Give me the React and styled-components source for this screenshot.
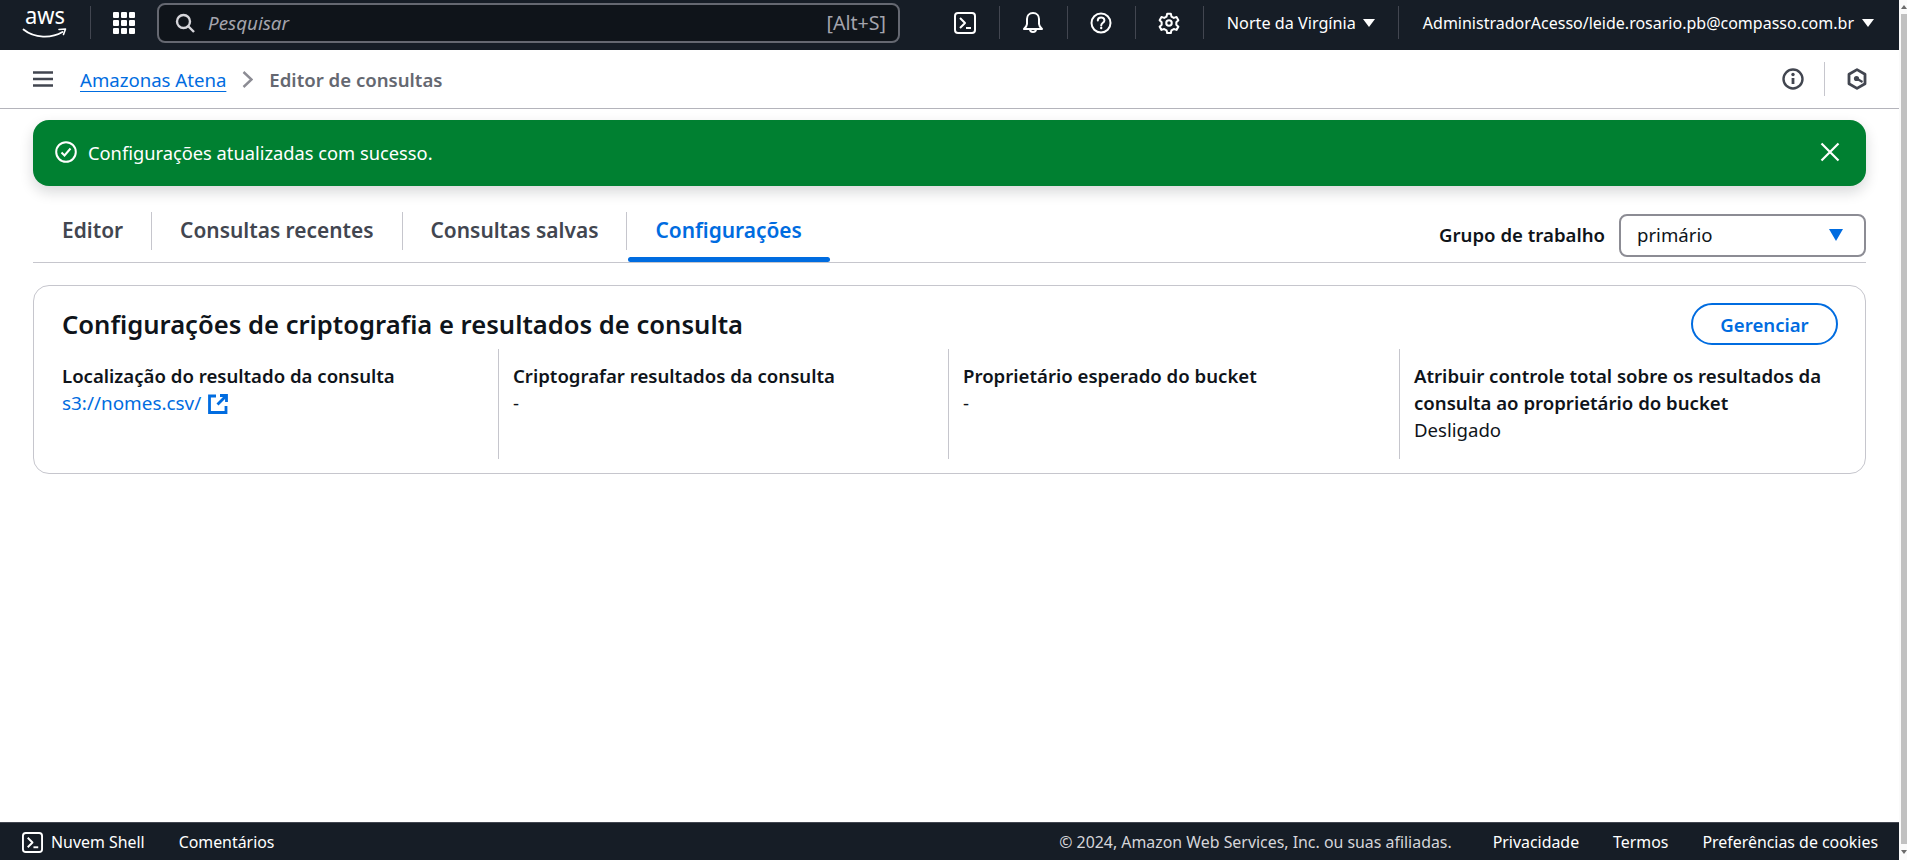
import React from "react";
import styled, { createGlobalStyle } from "styled-components";

const GlobalStyle = createGlobalStyle`
  html, body {
    margin: 0;
    padding: 0;
    height: 100%;
    overflow: hidden;
    background: #fff;
  }

  body {
    font-family: "Noto Sans", "Open Sans", sans-serif;
    font-size: 18.6px;
    color: #0f141a;
  }

  #root {
    height: 100%;
  }
`;

const Page = styled.div`
  height: 860px;
  display: flex;
`;

const Content = styled.div`
  flex: 1;
  min-width: 0;
  display: flex;
  flex-direction: column;
`;

const Scrollbar = styled.div`
  width: 8px;
  padding-left: 2px;
  box-sizing: border-box;
  background: #fafafa;
  flex-shrink: 0;
  display: flex;
  flex-direction: column;
  align-items: center;
  justify-content: space-between;
  padding-top: 5px;
  padding-bottom: 6px;
`;

const ScrollThumb = styled.div`
  width: 6px;
  flex: 1;
  margin: 5px 0 6px;
  background: #c1c1c1;
`;

const ScrollArrow = styled.span`
  width: 0;
  height: 0;
  border-left: 3px solid transparent;
  border-right: 3px solid transparent;
  ${(p) => (p.$up ? "border-bottom" : "border-top")}: 4px solid #6b6b6b;
`;

const TopNav = styled.header`
  height: 50px;
  box-sizing: border-box;
  padding-bottom: 5px;
  background: #161d26;
  display: flex;
  align-items: center;
  color: #fff;
  flex-shrink: 0;
`;

const LogoLink = styled.div`
  width: 91px;
  padding-left: 23px;
  box-sizing: border-box;
  display: flex;
  align-items: center;
  height: 33px;
  border-right: 1px solid #424650;
  svg {
    display: block;
    overflow: visible;
  }
`;

const GridButton = styled.div`
  width: 66px;
  display: flex;
  justify-content: center;
`;

const SearchBox = styled.div`
  width: 743px;
  height: 40px;
  box-sizing: border-box;
  border: 2px solid #656871;
  border-radius: 8px;
  background: #0f141a;
  display: flex;
  align-items: center;
  padding: 0 12px 0 16px;
  gap: 13px;
  color: #a4a4ad;
`;

const SearchText = styled.span`
  flex: 1;
  font-style: italic;
  font-size: 18.8px;
`;

const ShortcutText = styled.span`
  font-size: 19.6px;
  color: #a4a4ad;
`;

const NavRight = styled.div`
  margin-left: auto;
  display: flex;
  align-items: center;
  height: 33px;
`;

const NavIcon = styled.div`
  width: 68px;
  box-sizing: border-box;
  height: 100%;
  display: flex;
  align-items: center;
  justify-content: center;
  border-right: 1px solid #424650;
`;

const NavMenu = styled.div`
  height: 100%;
  display: flex;
  align-items: center;
  gap: ${(p) => (p.$last ? 8 : 7)}px;
  padding: 0 ${(p) => (p.$last ? 25 : 23)}px 0 ${(p) => (p.$last ? 24 : 23)}px;
  white-space: nowrap;
  font-size: ${(p) => (p.$last ? 16 : 16.2)}px;
  border-right: ${(p) => (p.$last ? "none" : "1px solid #424650")};
`;

const Caret = styled.span`
  width: 0;
  height: 0;
  border-left: ${(p) => p.$size || 6}px solid transparent;
  border-right: ${(p) => p.$size || 6}px solid transparent;
  border-top: ${(p) => (p.$size ? 12 : 8)}px solid ${(p) => p.$color || "#fff"};
  display: inline-block;
`;

const Breadcrumbs = styled.div`
  height: 59px;
  box-sizing: border-box;
  border-bottom: 1px solid #b4b4bb;
  display: flex;
  align-items: center;
  padding: 0 11px 0 33px;
  flex-shrink: 0;
`;

const Crumbs = styled.nav`
  margin-left: 27px;
  display: flex;
  align-items: center;
  gap: 16px;
  font-size: 18.6px;
  font-weight: 600;
`;

const CrumbLink = styled.a`
  color: #006ce0;
  font-weight: 400;
  text-decoration: underline;
  text-underline-offset: 4px;
  text-decoration-thickness: 1px;
`;

const CrumbCurrent = styled.span`
  color: #656871;
`;

const ToolGroup = styled.div`
  margin-left: auto;
  display: flex;
  align-items: center;
  height: 34px;
`;

const ToolButton = styled.div`
  width: ${(p) => p.$w}px;
  box-sizing: border-box;
  height: 100%;
  display: flex;
  align-items: center;
  justify-content: center;
  border-right: ${(p) => (p.$divider ? "1px solid #c6c6cd" : "none")};
`;

const Main = styled.main`
  flex: 1;
  padding: 11px 33px 0 33px;
  display: flex;
  flex-direction: column;
`;

const Flash = styled.div`
  height: 66px;
  box-sizing: border-box;
  border-radius: 16px;
  background: #008031;
  color: #fff;
  display: flex;
  align-items: center;
  padding: 0 26px 2px 22px;
  gap: 11px;
  box-shadow: 0 6px 14px rgba(15, 20, 26, 0.16);
`;

const FlashText = styled.span`
  flex: 1;
  font-size: 18.3px;
`;

const TabBar = styled.div`
  margin-top: 26px;
  height: 51px;
  box-sizing: border-box;
  display: flex;
  align-items: flex-start;
  justify-content: space-between;
  border-bottom: 1px solid #c6c6cd;
`;

const Tabs = styled.div`
  display: flex;
`;

const Tab = styled.div`
  position: relative;
  height: 38px;
  box-sizing: border-box;
  display: flex;
  align-items: center;
  padding: 0 28px 3px ${(p) => (p.$first ? 29 : 28)}px;
  font-size: 20.9px;
  font-weight: 600;
  color: ${(p) => (p.$active ? "#006ce0" : "#424650")};
  border-left: ${(p) => (p.$first ? "none" : "1px solid #c6c6cd")};

  ${(p) =>
    p.$active &&
    `
    &::after {
      content: "";
      position: absolute;
      left: 1px;
      right: 0;
      bottom: -12px;
      height: 5px;
      border-radius: 3px;
      background: #006ce0;
    }
  `}
`;

const Workgroup = styled.div`
  display: flex;
  align-items: center;
  gap: 14px;
  padding-top: 2px;
  font-weight: 600;
  font-size: 18.6px;
`;

const WorkgroupLabel = styled.span`
  margin-bottom: 2px;
`;

const SelectBox = styled.div`
  width: 247px;
  height: 43px;
  box-sizing: border-box;
  border: 2px solid #8c8c94;
  border-radius: 8px;
  display: flex;
  align-items: center;
  justify-content: space-between;
  padding: 0 21px 2px 16px;
  font-weight: 400;
`;

const Card = styled.section`
  margin-top: 22px;
  height: 189px;
  box-sizing: border-box;
  border: 1px solid #c6c6cd;
  border-radius: 16px;
  padding: 17px 27px 0 28px;
`;

const CardHeader = styled.div`
  display: flex;
  align-items: center;
  justify-content: space-between;
  height: 42px;
`;

const CardTitle = styled.h2`
  margin: 0;
  font-size: 25.6px;
  font-weight: 600;
`;

const ManageButton = styled.button`
  width: 147px;
  height: 42px;
  box-sizing: border-box;
  border: 2px solid #006ce0;
  border-radius: 21px;
  background: #fff;
  color: #006ce0;
  font: 600 18.6px "Noto Sans", sans-serif;
`;

const Columns = styled.div`
  margin-top: 4px;
  display: grid;
  grid-template-columns: 436px 450px 451px 1fr;
  height: 110px;
`;

const Column = styled.div`
  padding: 13px 14px 0 ${(p) => (p.$first ? 0 : 14)}px;
  border-left: ${(p) => (p.$first ? "none" : "1px solid #c6c6cd")};
  line-height: 27px;
`;

const Label = styled.div`
  font-weight: 600;
`;

const ExternalLink = styled.a`
  color: #006ce0;
  display: inline-flex;
  align-items: center;
  gap: 7px;
  font-size: 18.9px;
`;

const Footer = styled.footer`
  height: 38px;
  background: #161d26;
  border-top: 1px solid #424650;
  box-sizing: border-box;
  color: #fff;
  display: flex;
  align-items: center;
  padding: 1px 21px 0 22px;
  font-size: 15.9px;
  flex-shrink: 0;
`;

const FooterItem = styled.span`
  display: flex;
  align-items: center;
  gap: 8px;
  margin-right: 34px;
`;

const Copyright = styled.span`
  margin-left: auto;
  color: #d5d5da;
  margin-right: 7px;
`;

const FooterLink = styled.span`
  margin-left: 34px;
`;

const ShellIcon = ({ size = 22 }) => (
  <svg width={size} height={size} viewBox="0 0 22 22" fill="none" stroke="#fff" strokeWidth="2">
    <rect x="1" y="1" width="20" height="20" rx="3" />
    <path d="M6 6l5 5-5 5" strokeLinejoin="round" />
    <path d="M12 16h5" />
  </svg>
);

const AwsLogo = () => (
  <svg width="44" height="30" viewBox="0 0 44 30">
    <text
      x="2"
      y="16"
      fill="#fff"
      fontFamily="Noto Sans, sans-serif"
      fontSize="23"
      textLength="40"
      lengthAdjust="spacingAndGlyphs"
    >
      aws
    </text>
    <path d="M0.500 21.500c11 9 28 9 39 2.500" fill="none" stroke="#fff" strokeWidth="1.800" strokeLinecap="round" />
    <path d="M36 21.500l6.500-.5-2 5.500" fill="none" stroke="#fff" strokeWidth="1.600" strokeLinejoin="round" strokeLinecap="round" />
  </svg>
);

const GridIcon = () => (
  <svg width="22" height="22" viewBox="0 0 22 22" fill="#fff">
    {[0, 8, 16].flatMap((y) =>
      [0, 8, 16].map((x) => <rect key={`${x}-${y}`} x={x} y={y} width="6" height="6" rx="1" />)
    )}
  </svg>
);

const SearchIcon = () => (
  <svg width="20" height="20" viewBox="0 0 20 20" fill="none" stroke="#d5d5da" strokeWidth="2.400">
    <circle cx="8.500" cy="8.500" r="6.500" />
    <path d="M13 13l6 6" />
  </svg>
);

const BellIcon = () => (
  <svg width="22" height="24" viewBox="0 0 22 24" fill="none" stroke="#fff" strokeWidth="2" strokeLinejoin="round">
    <path d="M11 2c-4 0-6 3-6 6v5c0 2-1 3-3 5h18c-2-2-3-3-3-5V8c0-3-2-6-6-6z" />
    <path d="M8 18a3 3 0 0 0 6 0" />
  </svg>
);

const HelpIcon = () => (
  <svg width="22" height="22" viewBox="0 0 22 22" fill="none" stroke="#fff" strokeWidth="2">
    <circle cx="11" cy="11" r="9.500" />
    <path d="M7.800 8.600c0-4.200 6.600-4.200 6.600-.2 0 2.400-3.200 2.400-3.200 5" strokeLinecap="round" />
    <circle cx="11.200" cy="16" r="1.200" fill="#fff" stroke="none" />
  </svg>
);

const GearIcon = () => (
  <svg width="22" height="22" viewBox="0 0 24 24" fill="none" stroke="#fff" strokeWidth="2.200" strokeLinejoin="round">
    <path d="M10 2h4l.7 3 2.500 1.400 3-.9 2 3.500-2.200 2.100v2.800l2.200 2.100-2 3.500-3-.9-2.500 1.400-.7 3h-4l-.7-3-2.500-1.400-3 .9-2-3.500 2.200-2.100v-2.800L1.800 9l2-3.500 3 .9L9.300 5z" />
    <circle cx="12" cy="12" r="3" />
  </svg>
);

const MenuIcon = () => (
  <svg width="20" height="16" viewBox="0 0 20 16" stroke="#424650" strokeWidth="2.400">
    <path d="M0 1.500h20M0 8h20M0 14.500h20" />
  </svg>
);

const ChevronIcon = () => (
  <svg width="11" height="17" viewBox="0 0 11 17" fill="none" stroke="#8c8c94" strokeWidth="2.400">
    <path d="M1.500 1l8 7.500-8 7.500" />
  </svg>
);

const InfoIcon = () => (
  <svg width="22" height="22" viewBox="0 0 22 22" fill="none" stroke="#424650" strokeWidth="2.400">
    <circle cx="11" cy="11" r="9.500" />
    <path d="M11 10v6" strokeWidth="2.800" />
    <circle cx="11" cy="6.500" r="1.700" fill="#424650" stroke="none" />
  </svg>
);

const HexIcon = () => (
  <svg width="20" height="22" viewBox="0 0 20 22" fill="none" stroke="#424650" strokeWidth="2.800" strokeLinejoin="round">
    <path d="M10 1.600l8 4.600v9.600l-8 4.600-8-4.600V6.200z" />
    <circle cx="9.500" cy="10.500" r="2.600" fill="#424650" stroke="none" />
    <path d="M9.500 10.500l6 3.500" strokeWidth="2.200" />
  </svg>
);

const CheckCircle = () => (
  <svg width="22" height="22" viewBox="0 0 22 22" fill="none" stroke="#fff" strokeWidth="2">
    <circle cx="11" cy="11" r="9.800" />
    <path d="M6.500 11.500l3 3 6-7" />
  </svg>
);

const CloseIcon = () => (
  <svg width="20" height="20" viewBox="0 0 20 20" fill="none" stroke="#fff" strokeWidth="2.200">
    <path d="M1.500 1.500l17 17M18.500 1.500l-17 17" />
  </svg>
);

const ExternalIcon = () => (
  <svg width="20" height="20" viewBox="0 0 20 20" fill="none" stroke="#006ce0" strokeWidth="2.800">
    <path d="M8 2H1.500v16.500H18V12" />
    <path d="M12 1.500h6.500V8" />
    <path d="M18 2l-8.500 8.500" />
  </svg>
);

const columns = [
  { label: "Localização do resultado da consulta", link: "s3://nomes.csv/" },
  { label: "Criptografar resultados da consulta", value: "-" },
  { label: "Proprietário esperado do bucket", value: "-" },
  {
    label: "Atribuir controle total sobre os resultados da consulta ao proprietário do bucket",
    value: "Desligado",
  },
];

const tabs = ["Editor", "Consultas recentes", "Consultas salvas", "Configurações"];

export default function App() {
  return (
    <Page>
      <GlobalStyle />
      <Content>
        <TopNav>
          <LogoLink>
            <AwsLogo />
          </LogoLink>
          <GridButton>
            <GridIcon />
          </GridButton>
          <SearchBox>
            <SearchIcon />
            <SearchText>Pesquisar</SearchText>
            <ShortcutText>[Alt+S]</ShortcutText>
          </SearchBox>
          <NavRight>
            <NavIcon>
              <ShellIcon />
            </NavIcon>
            <NavIcon>
              <BellIcon />
            </NavIcon>
            <NavIcon>
              <HelpIcon />
            </NavIcon>
            <NavIcon>
              <GearIcon />
            </NavIcon>
            <NavMenu>
              Norte da Virgínia <Caret />
            </NavMenu>
            <NavMenu $last>
              AdministradorAcesso/leide.rosario.pb@compasso.com.br <Caret />
            </NavMenu>
          </NavRight>
        </TopNav>
        <Breadcrumbs>
          <MenuIcon />
          <Crumbs>
            <CrumbLink>Amazonas Atena</CrumbLink>
            <ChevronIcon />
            <CrumbCurrent>Editor de consultas</CrumbCurrent>
          </Crumbs>
          <ToolGroup>
            <ToolButton $w={64} $divider>
              <InfoIcon />
            </ToolButton>
            <ToolButton $w={63}>
              <HexIcon />
            </ToolButton>
          </ToolGroup>
        </Breadcrumbs>
        <Main>
          <Flash>
            <CheckCircle />
            <FlashText>Configurações atualizadas com sucesso.</FlashText>
            <CloseIcon />
          </Flash>
          <TabBar>
            <Tabs>
              {tabs.map((tab, i) => (
                <Tab key={tab} $first={i === 0} $active={i === 3}>
                  {tab}
                </Tab>
              ))}
            </Tabs>
            <Workgroup>
              <WorkgroupLabel>Grupo de trabalho</WorkgroupLabel>
              <SelectBox>
                primário
                <Caret $color="#006ce0" $size={7.5} />
              </SelectBox>
            </Workgroup>
          </TabBar>
          <Card>
            <CardHeader>
              <CardTitle>Configurações de criptografia e resultados de consulta</CardTitle>
              <ManageButton>Gerenciar</ManageButton>
            </CardHeader>
            <Columns>
              {columns.map((col, i) => (
                <Column key={col.label} $first={i === 0}>
                  <Label>{col.label}</Label>
                  {col.link ? (
                    <ExternalLink>
                      {col.link}
                      <ExternalIcon />
                    </ExternalLink>
                  ) : (
                    <div>{col.value}</div>
                  )}
                </Column>
              ))}
            </Columns>
          </Card>
        </Main>
        <Footer>
          <FooterItem>
            <ShellIcon size={21} />
            Nuvem Shell
          </FooterItem>
          <FooterItem>Comentários</FooterItem>
          <Copyright>© 2024, Amazon Web Services, Inc. ou suas afiliadas.</Copyright>
          <FooterLink>Privacidade</FooterLink>
          <FooterLink>Termos</FooterLink>
          <FooterLink>Preferências de cookies</FooterLink>
        </Footer>
      </Content>
      <Scrollbar>
        <ScrollArrow $up />
        <ScrollThumb />
        <ScrollArrow />
      </Scrollbar>
    </Page>
  );
}
